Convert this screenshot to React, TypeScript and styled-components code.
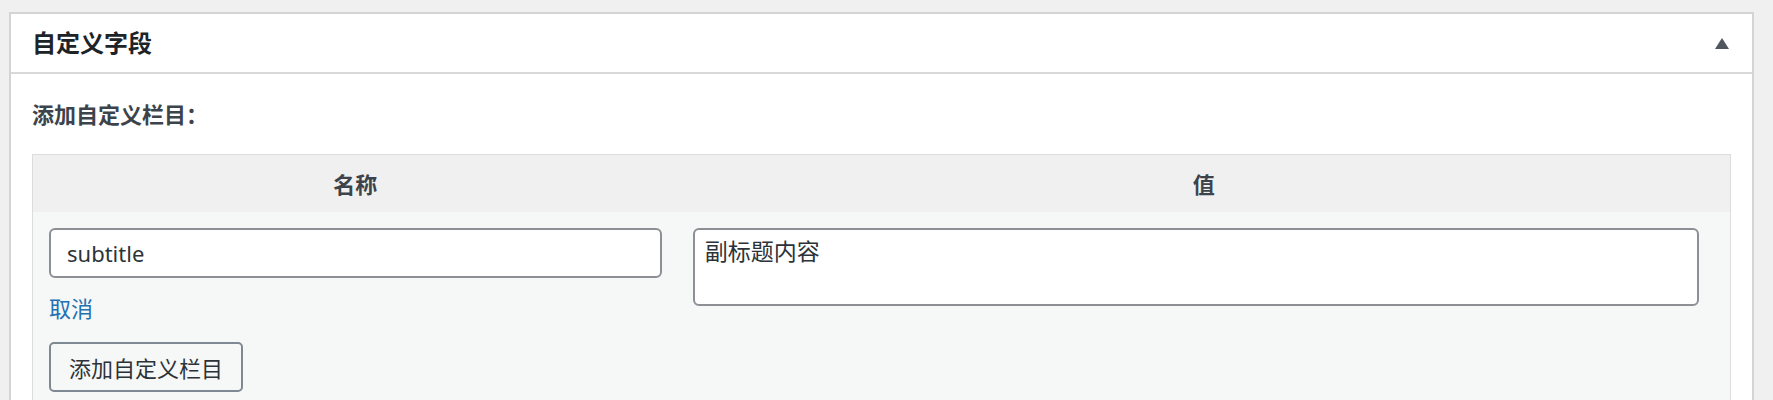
import React from 'react';
import styled, { createGlobalStyle } from 'styled-components';

const GlobalStyle = createGlobalStyle`
  html, body {
    margin: 0;
    padding: 0;
    background: #f0f0f1;
    font-family: "Noto Sans", "Noto Sans CJK SC", sans-serif;
    color: #3c434a;
  }
  * { box-sizing: border-box; }
`;

const App: React.FC = () => {
  return (
    <>
      <GlobalStyle />
      <Page>
        <Postbox>
          <PostboxHeader>
            <Title>自定义字段</Title>
            <ToggleIcon viewBox="0 0 14 11" aria-hidden="true">
              <polygon points="7,0 14,11 0,11" />
            </ToggleIcon>
          </PostboxHeader>
          <Inside>
            <SectionLabel>添加自定义栏目：</SectionLabel>
            <MetaTable>
              <thead>
                <tr>
                  <HeadCell $width="38%">名称</HeadCell>
                  <HeadCell>值</HeadCell>
                </tr>
              </thead>
              <tbody>
                <tr>
                  <BodyCell>
                    <TextInput defaultValue="subtitle" />
                    <CancelLink href="#">取消</CancelLink>
                    <SecondaryButton type="button">添加自定义栏目</SecondaryButton>
                  </BodyCell>
                  <BodyCell $wide>
                    <ValueArea defaultValue="副标题内容" />
                  </BodyCell>
                </tr>
              </tbody>
            </MetaTable>
          </Inside>
        </Postbox>
      </Page>
    </>
  );
};

export default App;

const Page = styled.div`
  padding: 12px 19px 0 9px;
`;

const Postbox = styled.div`
  background: #ffffff;
  border: 2px solid #d3d4d6;
  border-bottom: none;
`;

const PostboxHeader = styled.div`
  display: flex;
  align-items: center;
  justify-content: space-between;
  height: 60px;
  padding: 0 23px 0 21px;
  border-bottom: 2px solid #d8d9db;
`;

const Title = styled.h2`
  margin: 0;
  font-size: 24px;
  font-weight: 700;
  color: #1d2327;
  line-height: 1;
`;

const ToggleIcon = styled.svg`
  width: 14px;
  height: 11px;
  fill: #50575e;
`;

const Inside = styled.div`
  padding: 25px 21px 40px;
`;

const SectionLabel = styled.p`
  margin: 0 0 25px;
  font-size: 22px;
  font-weight: 700;
  line-height: 30px;
  color: #3c434a;
`;

const MetaTable = styled.table`
  width: 100%;
  border-collapse: collapse;
  border: 1px solid #dcdcde;
  table-layout: fixed;
`;

const HeadCell = styled.th<{ $width?: string }>`
  width: ${(p) => p.$width || 'auto'};
  height: 57px;
  background: #f0f0f1;
  font-size: 22px;
  font-weight: 700;
  color: #3c434a;
  text-align: center;
  padding: 0;
`;

const BodyCell = styled.td<{ $wide?: boolean }>`
  background: #f6f7f7;
  vertical-align: top;
  padding: ${(p) => (p.$wide ? '16px 31px 16px 15px' : '16px')};
`;

const TextInput = styled.input`
  display: block;
  width: 100%;
  height: 50px;
  padding: 0 16px;
  border: 2px solid #8c8f94;
  border-radius: 6px;
  background: #ffffff;
  font-family: "Noto Sans", "Noto Sans CJK SC", sans-serif;
  font-size: 22px;
  color: #2c3338;
  outline: none;
`;

const ValueArea = styled.textarea`
  display: block;
  width: 100%;
  height: 78px;
  padding: 4px 10px;
  border: 2px solid #8c8f94;
  border-radius: 6px;
  background: #ffffff;
  font-family: "Noto Sans", "Noto Sans CJK SC", sans-serif;
  font-size: 23px;
  line-height: 34px;
  color: #2c3338;
  resize: none;
  outline: none;
`;

const CancelLink = styled.a`
  display: block;
  margin-top: 15px;
  font-size: 22px;
  line-height: 30px;
  color: #2271b1;
  text-decoration: none;
`;

const SecondaryButton = styled.button`
  display: block;
  margin-top: 19px;
  height: 50px;
  padding: 0 18px;
  border: 2px solid #7e8993;
  border-radius: 5px;
  background: #f6f7f7;
  font-family: "Noto Sans", "Noto Sans CJK SC", sans-serif;
  font-size: 22px;
  color: #2c3338;
  cursor: pointer;
`;
